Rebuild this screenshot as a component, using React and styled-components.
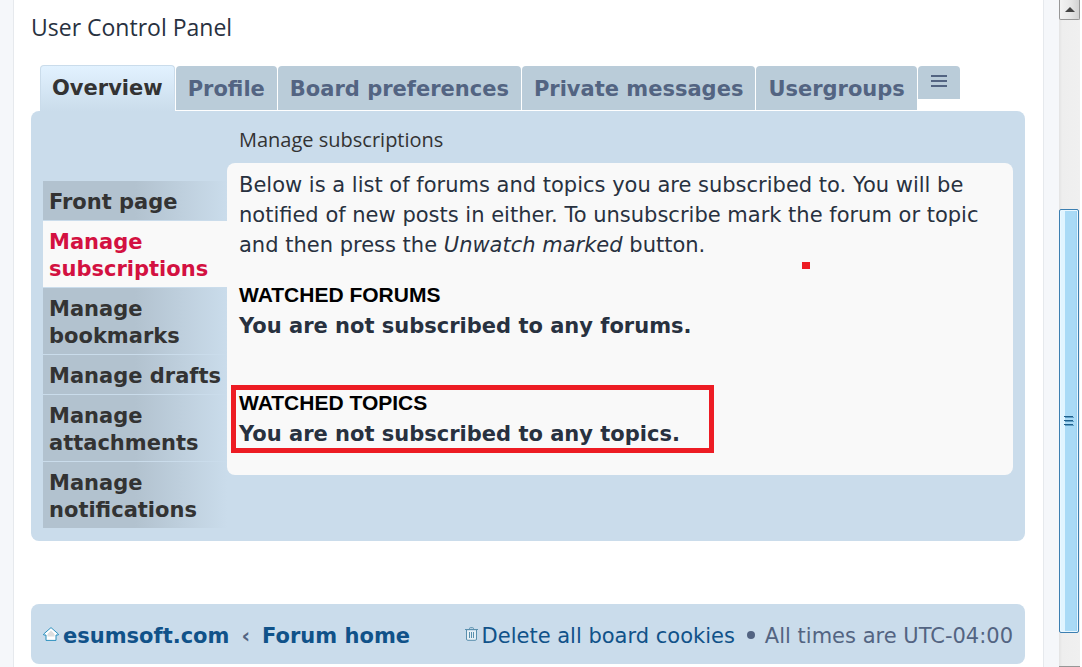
import React from "react";
import styled, { createGlobalStyle } from "styled-components";

const TABS = ["Overview", "Profile", "Board preferences", "Private messages", "Usergroups"];

const SECTIONS = [
  "Front page",
  "Manage subscriptions",
  "Manage bookmarks",
  "Manage drafts",
  "Manage attachments",
  "Manage notifications",
];

export default function App() {
  return (
    <>
      <GlobalStyle />
      <Window>
        <Page>
          <Wrap>
            <PageTitle>User Control Panel</PageTitle>
            <Tabs aria-label="Control panel">
              {TABS.map((tab, i) => (
                <Tab href="#" key={tab} $active={i === 0}>
                  {tab}
                </Tab>
              ))}
              <MenuButton aria-label="More">
                <MenuIcon />
              </MenuButton>
            </Tabs>
            <Panel>
              <SideNav aria-label="Overview">
                {SECTIONS.map((section) => (
                  <SideLink href="#" key={section} $active={section === "Manage subscriptions"}>
                    {section}
                  </SideLink>
                ))}
              </SideNav>
              <Main>
                <PanelTitle>Manage subscriptions</PanelTitle>
                <Content>
                  <Intro>
                    Below is a list of forums and topics you are subscribed to. You will be notified of new
                    posts in either. To unsubscribe mark the forum or topic and then press the{" "}
                    <em>Unwatch marked</em> button.
                  </Intro>
                  <Dot />
                  <Watched title="Watched forums">You are not subscribed to any forums.</Watched>
                  <Watched title="Watched topics" marked>
                    You are not subscribed to any topics.
                  </Watched>
                </Content>
              </Main>
            </Panel>
            <Footer>
              <Crumbs aria-label="Breadcrumb">
                <HomeIcon />
                <FooterLink href="#">esumsoft.com</FooterLink>
                <Chevron>‹</Chevron>
                <FooterLink href="#">Forum home</FooterLink>
              </Crumbs>
              <FooterInfo>
                <TrashIcon />
                <FooterLink href="#">Delete all board cookies</FooterLink>
                <Bullet />
                <FooterText>All times are UTC-04:00</FooterText>
              </FooterInfo>
            </Footer>
          </Wrap>
        </Page>
        <Scrollbar />
      </Window>
    </>
  );
}

function Watched({ title, marked, children }) {
  return (
    <WatchedBlock $marked={marked}>
      <WatchedTitle>{title}</WatchedTitle>
      <WatchedText>{children}</WatchedText>
    </WatchedBlock>
  );
}

function Scrollbar() {
  return (
    <Track aria-hidden="true">
      <ArrowBox>
        <svg width="10" height="5" viewBox="0 0 10 5">
          <path d="M5 0 10 5H0Z" fill="#444" />
        </svg>
      </ArrowBox>
      <Thumb>
        <svg width="10" height="11" viewBox="0 0 10 11">
          <path d="M0 .5h9M0 4.5h9M0 8.5h9" stroke="#1f5f8c" />
          <path d="M1 1.5h9M1 5.5h9M1 9.5h9" stroke="#5f9fc6" />
        </svg>
      </Thumb>
      <ArrowEdge />
    </Track>
  );
}

function MenuIcon() {
  return (
    <svg width="16" height="12" viewBox="0 0 16 12">
      <path d="M0 1h16M0 6h16M0 11h16" stroke="#536482" strokeWidth="2" />
    </svg>
  );
}

function HomeIcon() {
  return (
    <svg width="16" height="14" viewBox="0 0 16 14">
      <path
        d="M8 .6 15.3 7v1H13v5.4H3V8H.7V7Z"
        fill="#fff"
        stroke="#2b8fbd"
        strokeLinejoin="round"
      />
      <path d="M8 3.5 11.5 7v2.5h-7V7Z" fill="#dedede" />
    </svg>
  );
}

function TrashIcon() {
  return (
    <svg width="13" height="14" viewBox="0 0 13 14">
      <path d="M2 4h9v9H2Z" fill="#e6f0f6" />
      <path
        d="M0 2.5h13M4.5 2.5v-1q0-.8.8-.8h2.4q.8 0 .8.8v1M1.5 3v9q0 1.3 1.3 1.3h7.4q1.3 0 1.3-1.3V3M4.5 5v6M6.5 5v6M8.5 5v6"
        fill="none"
        stroke="#5a90ae"
      />
    </svg>
  );
}

const GlobalStyle = createGlobalStyle`
  * {
    box-sizing: border-box;
  }

  body {
    margin: 0;
    overflow: hidden;
    background-color: #fff;
    color: #28313f;
    font-family: "DejaVu Sans", Verdana, sans-serif;
    font-size: 21px;
  }

  a {
    text-decoration: none;
  }

  svg {
    display: block;
    flex-shrink: 0;
  }
`;

const Window = styled.div`
  display: flex;
  height: 100vh;
  padding-right: 2px;
`;

const Page = styled.div`
  flex: 1;
  min-width: 0;
  padding: 0 15px 0 13px;
  background-color: #f5f7fa;
`;

const Wrap = styled.div`
  min-height: 100vh;
  padding: 11px 18px 0 17px;
  border: solid #e6e9ed;
  border-width: 0 1px;
  background-color: #fff;
`;

const PageTitle = styled.h2`
  margin: 0 0 22px;
  font: 400 23px/32px "Open Sans", "Trebuchet MS", sans-serif;
`;

const Tabs = styled.nav`
  display: flex;
  align-items: flex-start;
  gap: 1px;
  height: 46px;
  padding-left: 9px;
`;

const Tab = styled.a`
  height: ${(p) => (p.$active ? 46 : 44)}px;
  margin-top: ${(p) => (p.$active ? 0 : 1)}px;
  padding: 0 ${(p) => (p.$active ? 11 : 12)}px;
  border: solid #cadceb;
  border-width: ${(p) => (p.$active ? "1px 1px 0" : "0")};
  border-radius: 4px 4px 0 0;
  background: ${(p) => (p.$active ? "linear-gradient(#e2f2ff, #cadceb)" : "#baccd9")};
  color: ${(p) => (p.$active ? "#333" : "#536482")};
  font-weight: 700;
  line-height: ${(p) => (p.$active ? 44 : 46)}px;
  white-space: nowrap;
`;

const MenuButton = styled.button`
  display: flex;
  justify-content: center;
  width: 42px;
  height: 33px;
  margin: 1px 0 0;
  padding: 9px 0 0;
  border: 0;
  border-radius: 4px 4px 0 0;
  background-color: #baccd9;
`;

const Panel = styled.div`
  display: flex;
  padding: 12px 12px 13px;
  border-radius: 8px;
  background-color: #cadceb;
`;

const SideNav = styled.nav`
  display: flex;
  flex-direction: column;
  gap: 1px;
  width: 184px;
  flex-shrink: 0;
  padding-top: 58px;
`;

const SideLink = styled.a`
  padding: 8px 6px 4px;
  background: ${(p) =>
    p.$active ? "#f9f9f9" : "linear-gradient(to right, #b2c2cf 50%, #cadceb 100%)"};
  color: ${(p) => (p.$active ? "#d31141" : "#333")};
  font-weight: 700;
  line-height: 27px;
`;

const Main = styled.main`
  flex: 1;
  min-width: 0;
`;

const PanelTitle = styled.h3`
  margin: 2px 12px 8px;
  color: #333;
  font: 400 20px/30px "Open Sans", "Trebuchet MS", sans-serif;
`;

const Content = styled.div`
  position: relative;
  min-height: 312px;
  padding: 7px 12px 0;
  border-radius: 8px;
  background-color: #f9f9f9;
`;

const Intro = styled.p`
  margin: 0 0 20px;
  line-height: 30px;
`;

const Dot = styled.span`
  position: absolute;
  top: 99px;
  left: 575px;
  width: 8px;
  height: 7px;
  background-color: #ed1c24;
`;

const WatchedBlock = styled.section`
  position: relative;
  width: fit-content;
  margin-bottom: ${(p) => (p.$marked ? 0 : 46)}px;

  &::after {
    content: "";
    display: ${(p) => (p.$marked ? "block" : "none")};
    position: absolute;
    inset: -3px -34px -3px -8px;
    border: 5px solid #ed1c24;
  }
`;

const WatchedTitle = styled.h3`
  margin: 0;
  color: #000;
  font: 700 21px/30px "Liberation Sans", Arial, sans-serif;
  text-transform: uppercase;
`;

const WatchedText = styled.p`
  margin: 0;
  font-weight: 700;
  line-height: 32px;
`;

const Footer = styled.footer`
  display: flex;
  align-items: center;
  justify-content: space-between;
  height: 60px;
  margin-top: 63px;
  padding: 0 12px;
  border-radius: 8px;
  background-color: #cadceb;
  color: #536482;
  white-space: nowrap;
`;

const Crumbs = styled.nav`
  display: flex;
  align-items: center;
  gap: 4px;
  font-weight: 700;
`;

const FooterText = styled.span`
  padding-top: 4px;
`;

const FooterLink = styled.a`
  padding-top: 4px;
  color: #105289;
`;

const Chevron = styled(FooterText)`
  padding-right: 8px;
  padding-left: 8px;
`;

const FooterInfo = styled.div`
  display: flex;
  align-items: center;
  gap: 4px;
`;

const Bullet = styled.span`
  width: 8px;
  height: 8px;
  margin: 2px 6px 0 8px;
  border-radius: 50%;
  background-color: #536482;
`;

const Track = styled.div`
  display: grid;
  grid-template-rows: 20px 189fr 424fr 33fr 1px;
  width: 21px;
  background: linear-gradient(to right, #e3e3e3, #eee 15%, #f0f0f0);
`;

const ArrowBox = styled.div`
  display: flex;
  align-items: center;
  justify-content: center;
  border: solid #979797;
  border-width: 0 1px 1px;
  border-radius: 0 0 2px 2px;
  background: linear-gradient(to right, #f3f3f3, #e8e8e8 50%, #d2d2d2);
`;

const Thumb = styled.div`
  grid-row: 3;
  display: flex;
  align-items: center;
  justify-content: center;
  margin-right: 1px;
  border: 1px solid #3c7fb1;
  border-radius: 2px;
  box-shadow: inset 0 0 0 1px #eaf7ff;
  background: linear-gradient(to right, #e0f4ff 0 30%, #a9daf6 30% 85%, #8fcbed);
`;

const ArrowEdge = styled.div`
  grid-row: 5;
  background-color: #979797;
`;
